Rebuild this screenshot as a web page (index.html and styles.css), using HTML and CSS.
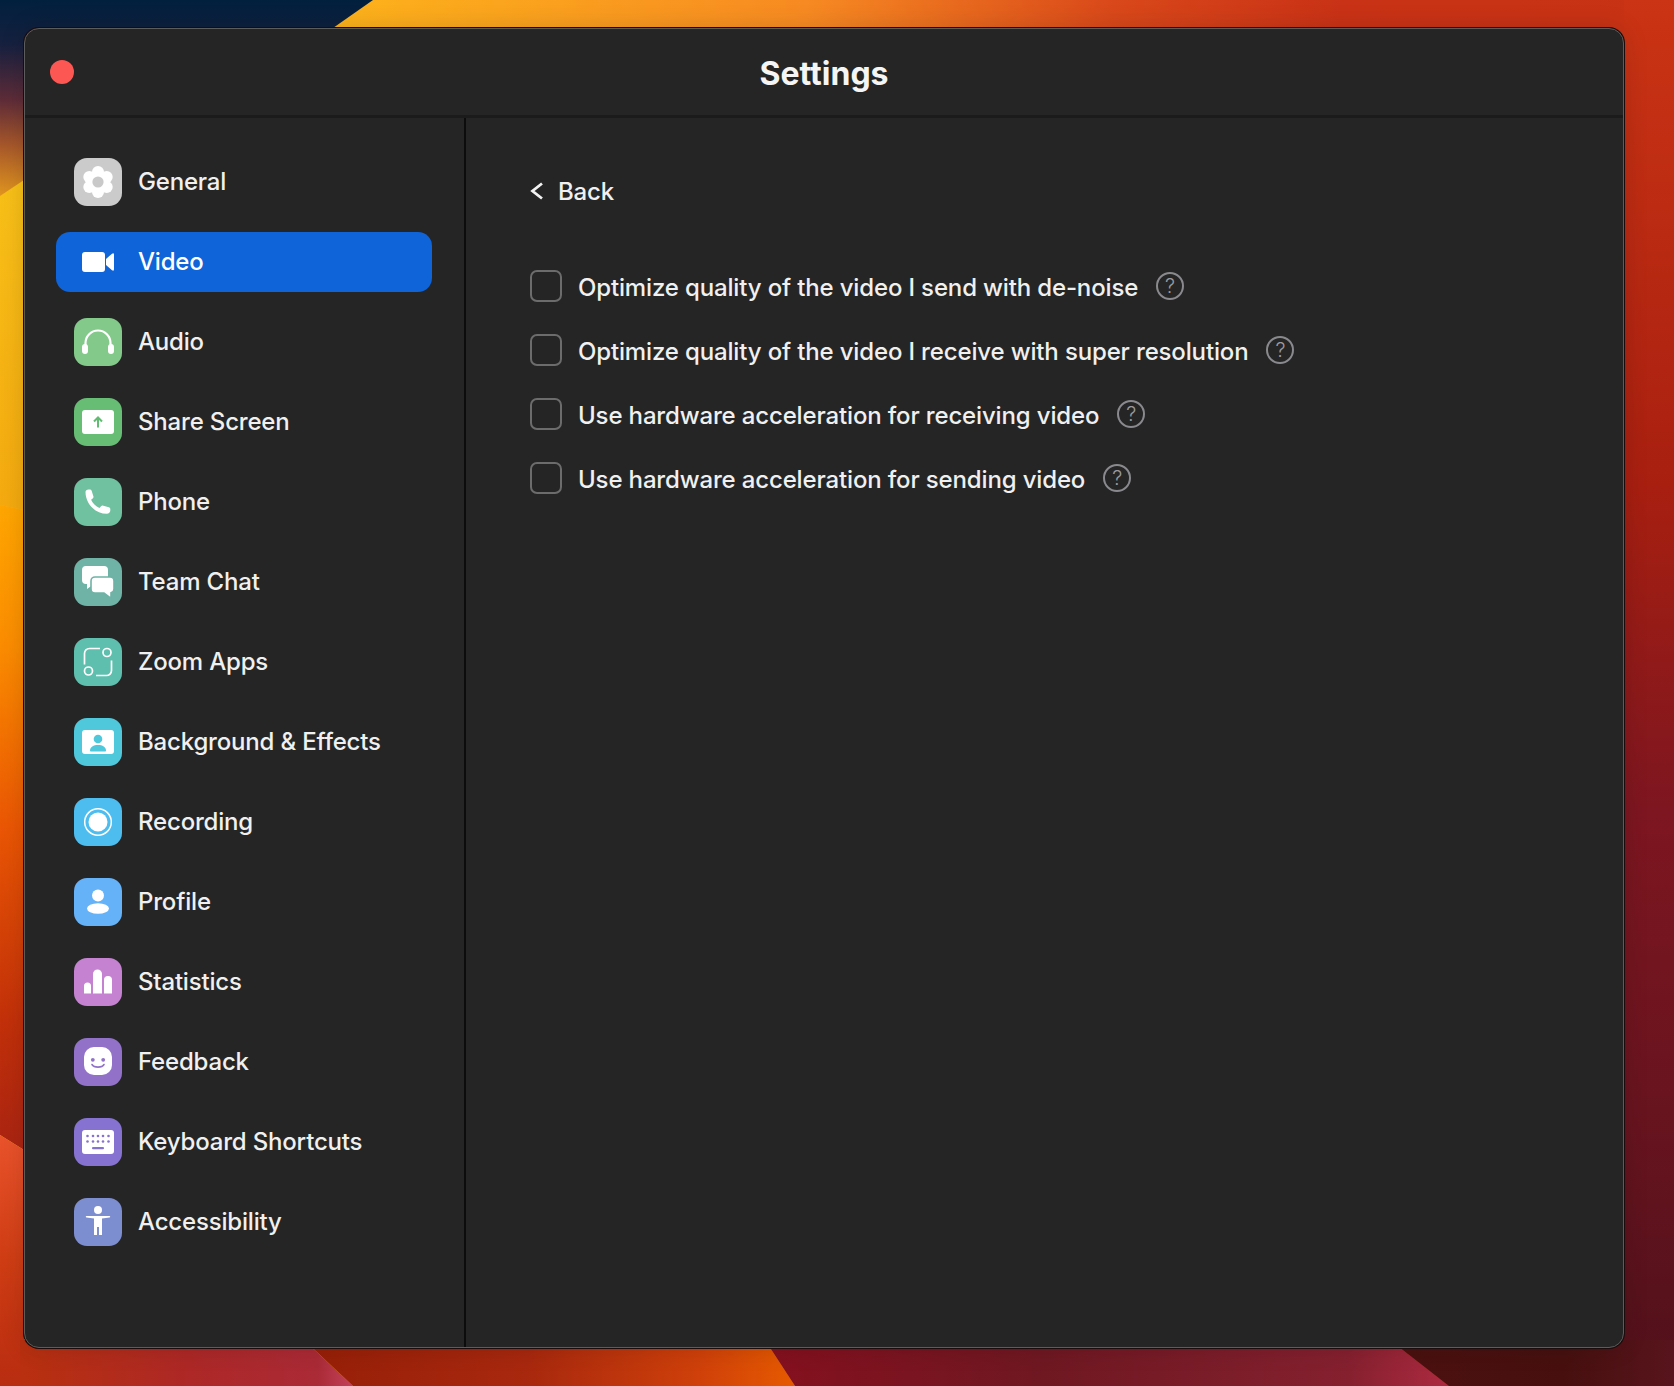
FILE: index.html
```html
<!DOCTYPE html>
<html lang="en">
<head>
<meta charset="utf-8">
<title>Settings</title>
<link rel="stylesheet" href="styles.css">
</head>
<body>
<svg class="wallpaper" viewBox="0 0 1674 1386" preserveAspectRatio="none" aria-hidden="true">
  <defs>
    <linearGradient id="topBand" x1="340" y1="0" x2="1674" y2="0" gradientUnits="userSpaceOnUse">
      <stop offset="0" stop-color="#fdb21b"/><stop offset="0.35" stop-color="#f78a22"/><stop offset="0.58" stop-color="#d9481a"/><stop offset="0.75" stop-color="#c93216"/><stop offset="1" stop-color="#c83214"/>
    </linearGradient>
    <linearGradient id="rightBand" x1="0" y1="0" x2="0" y2="1386" gradientUnits="userSpaceOnUse">
      <stop offset="0" stop-color="#cb3414"/><stop offset="0.35" stop-color="#a81f10"/><stop offset="0.58" stop-color="#7e1620"/><stop offset="0.8" stop-color="#68141f"/><stop offset="1" stop-color="#50111a"/>
    </linearGradient>
    <linearGradient id="navy" x1="0" y1="0" x2="0" y2="200" gradientUnits="userSpaceOnUse">
      <stop offset="0" stop-color="#01203e"/><stop offset="0.22" stop-color="#16203f"/><stop offset="0.5" stop-color="#5e2c38"/><stop offset="0.72" stop-color="#a5562a"/><stop offset="1" stop-color="#e59a1e"/>
    </linearGradient>
    <linearGradient id="leftA" x1="0" y1="180" x2="0" y2="520" gradientUnits="userSpaceOnUse">
      <stop offset="0" stop-color="#f8c018"/><stop offset="1" stop-color="#f4a90f"/>
    </linearGradient>
    <linearGradient id="leftB" x1="0" y1="505" x2="0" y2="1150" gradientUnits="userSpaceOnUse">
      <stop offset="0" stop-color="#ffa602"/><stop offset="0.22" stop-color="#fb8c00"/><stop offset="0.5" stop-color="#ea5604"/><stop offset="0.8" stop-color="#c2300a"/><stop offset="1" stop-color="#aa2412"/>
    </linearGradient>
    <linearGradient id="leftC" x1="0" y1="1135" x2="0" y2="1386" gradientUnits="userSpaceOnUse">
      <stop offset="0" stop-color="#ea532c"/><stop offset="0.5" stop-color="#cf3d14"/><stop offset="1" stop-color="#b82c10"/>
    </linearGradient>
    <linearGradient id="botA" x1="24" y1="0" x2="350" y2="0" gradientUnits="userSpaceOnUse">
      <stop offset="0" stop-color="#b8300f"/><stop offset="0.5" stop-color="#ad2826"/><stop offset="0.9" stop-color="#aa2a36"/><stop offset="1" stop-color="#c24058"/>
    </linearGradient>
    <linearGradient id="botB" x1="310" y1="0" x2="795" y2="0" gradientUnits="userSpaceOnUse">
      <stop offset="0" stop-color="#971f08"/><stop offset="0.45" stop-color="#a8280e"/><stop offset="0.8" stop-color="#cf400a"/><stop offset="1" stop-color="#e65a00"/>
    </linearGradient>
    <linearGradient id="botC" x1="770" y1="0" x2="1450" y2="0" gradientUnits="userSpaceOnUse">
      <stop offset="0" stop-color="#85101e"/><stop offset="0.4" stop-color="#6f1822"/><stop offset="0.85" stop-color="#85202f"/><stop offset="1" stop-color="#ad2a40"/>
    </linearGradient>
    <linearGradient id="botD" x1="1400" y1="0" x2="1674" y2="0" gradientUnits="userSpaceOnUse">
      <stop offset="0" stop-color="#4a110f"/><stop offset="0.6" stop-color="#47100f"/><stop offset="1" stop-color="#58141c"/>
    </linearGradient>
  </defs>
  <rect width="1674" height="1386" fill="url(#rightBand)"/>
  <polygon points="0,0 1674,0 1674,40 1600,1386 0,1386" fill="url(#topBand)"/>
  <rect x="1624" width="50" height="1386" fill="url(#rightBand)"/>
  <polygon points="0,0 373,0 333,28 0,200" fill="url(#navy)"/>
  <polygon points="0,196 24,180 24,510 0,505" fill="url(#leftA)"/>
  <polygon points="0,505 24,510 24,1150 0,1135" fill="url(#leftB)"/>
  <polygon points="0,1135 24,1150 24,1386 0,1386" fill="url(#leftC)"/>
  <polygon points="20,1340 304,1340 353,1386 20,1386" fill="url(#botA)"/>
  <polygon points="304,1340 765,1340 795,1386 353,1386" fill="url(#botB)"/>
  <polygon points="765,1340 1390,1340 1449,1386 795,1386" fill="url(#botC)"/>
  <polygon points="1390,1340 1674,1340 1674,1386 1449,1386" fill="url(#botD)"/>
</svg>

<div class="window">
  <header class="titlebar">
    <span class="close"></span>
    <h1 class="title">Settings</h1>
  </header>
  <div class="body">
    <nav class="sidebar">
      <a class="item"><span class="icon general"><svg viewBox="0 0 48 48"><g fill="#fff"><circle cx="24" cy="14" r="6"/><circle cx="24" cy="34" r="6"/><circle cx="15.3" cy="19" r="6"/><circle cx="32.7" cy="19" r="6"/><circle cx="15.3" cy="29" r="6"/><circle cx="32.7" cy="29" r="6"/><circle cx="24" cy="24" r="10"/></g><circle cx="24" cy="24" r="5.6" fill="#c9c9c9"/></svg></span><span>General</span></a>
      <a class="item active"><span class="icon"><svg viewBox="0 0 48 48"><rect x="8" y="14" width="23" height="20" rx="3" fill="#fff"/><path d="M32 21 38 15.7q2-1.3 2 1V31.300q0 2.300-2 1L32 27z" fill="#fff"/></svg></span><span>Video</span></a>
      <a class="item"><span class="icon audio"><svg viewBox="0 0 48 48"><path d="M11.500 30V25a12.500 12.500 0 0 1 25 0v5" fill="none" stroke="#fff" stroke-width="2.200"/><rect x="8" y="26" width="6" height="10" rx="3" fill="#fff"/><rect x="34" y="26" width="6" height="10" rx="3" fill="#fff"/></svg></span><span>Audio</span></a>
      <a class="item"><span class="icon share"><svg viewBox="0 0 48 48"><rect x="8" y="12" width="32" height="24" rx="3" fill="#fff"/><path d="M24 29.500V19.500M20 23.500l4-4 4 4" fill="none" stroke="#62bb72" stroke-width="2"/></svg></span><span>Share Screen</span></a>
      <a class="item"><span class="icon phone"><svg viewBox="0 0 48 48"><path d="M11.500 14C11.500 12.500 12.800 11.500 14.500 11.500H15.800C16.800 11.500 17.400 12 17.700 13L19.400 18.200C19.700 19.200 19.400 19.900 18.700 20.500L17.100 21.800C18.600 25.200 21.700 28.300 25.500 29.900L27 28.300C27.700 27.600 28.400 27.400 29.300 27.700L34.800 29.300C35.800 29.600 36.300 30.200 36.300 31.100V32.600C36.300 34.500 34.800 35.800 32.800 35.800 21 35.800 11.500 25.500 11.500 14Z" fill="#fff"/></svg></span><span>Phone</span></a>
      <a class="item"><span class="icon chat"><svg viewBox="0 0 48 48"><path d="M12 8H30a4 4 0 0 1 4 4V22a4 4 0 0 1-4 4H20L13 31V26H12a4 4 0 0 1-4-4V12a4 4 0 0 1 4-4Z" fill="#fff"/><path d="M21 19H36a4 4 0 0 1 4 4V31a4 4 0 0 1-3 3.800V40.500L30 35H21a4 4 0 0 1-4-4V23a4 4 0 0 1 4-4Z" fill="#fff" stroke="#6fb2a6" stroke-width="1.600"/></svg></span><span>Team Chat</span></a>
      <a class="item"><span class="icon apps"><svg viewBox="0 0 48 48"><g fill="none" stroke="#fff" stroke-width="1.700"><path d="M10.500 26.500V15.500a5 5 0 0 1 5-5H26"/><path d="M37.500 22.500V32.500a5 5 0 0 1-5 5H22"/><circle cx="33" cy="14.500" r="4"/><circle cx="14.500" cy="33" r="4"/></g></svg></span><span>Zoom Apps</span></a>
      <a class="item"><span class="icon bg"><svg viewBox="0 0 48 48"><rect x="8" y="12" width="32" height="24" rx="3" fill="#fff"/><circle cx="24" cy="21" r="4.300" fill="#4fc8dc"/><path d="M16 32.500C16 29 19.500 27 24 27S32 29 32 32.500c0 .6-.4 1-1 1H17c-.6 0-1-.4-1-1Z" fill="#4fc8dc"/></svg></span><span>Background &amp; Effects</span></a>
      <a class="item"><span class="icon rec"><svg viewBox="0 0 48 48"><circle cx="24" cy="24" r="13.300" fill="none" stroke="#fff" stroke-width="1.500"/><circle cx="24" cy="24" r="9.500" fill="#fff"/></svg></span><span>Recording</span></a>
      <a class="item"><span class="icon profile"><svg viewBox="0 0 48 48"><circle cx="24" cy="17.500" r="6" fill="#fff"/><ellipse cx="24" cy="30.500" rx="11" ry="5.300" fill="#fff"/></svg></span><span>Profile</span></a>
      <a class="item"><span class="icon stats"><svg viewBox="0 0 48 48"><g fill="#fff"><path d="M10 28a3.500 3.500 0 0 1 7 0v7.500H10Z"/><path d="M19 16a4.500 4.500 0 0 1 9 0v19.500H19Z"/><path d="M30 22a4 4 0 0 1 8 0v13.500H30Z"/></g></svg></span><span>Statistics</span></a>
      <a class="item"><span class="icon feedback"><svg viewBox="0 0 48 48"><rect x="10" y="9" width="28" height="28" rx="10" fill="#fff"/><circle cx="18.800" cy="21.800" r="1.900" fill="#9172c8"/><circle cx="29.200" cy="21.800" r="1.900" fill="#9172c8"/><path d="M18 26.500C20 30 28 30 30 26.500" fill="none" stroke="#9172c8" stroke-width="1.600" stroke-linecap="round"/></svg></span><span>Feedback</span></a>
      <a class="item"><span class="icon keys"><svg viewBox="0 0 48 48"><rect x="8" y="12" width="32" height="24" rx="3" fill="#fff"/><g fill="#8672d0"><circle cx="13.500" cy="18" r="1.300"/><circle cx="19" cy="18" r="1.300"/><circle cx="24" cy="18" r="1.300"/><circle cx="29" cy="18" r="1.300"/><circle cx="34.500" cy="18" r="1.300"/><circle cx="13.500" cy="23.500" r="1.300"/><circle cx="19" cy="23.500" r="1.300"/><circle cx="24" cy="23.500" r="1.300"/><circle cx="29" cy="23.500" r="1.300"/><circle cx="34.500" cy="23.500" r="1.300"/><rect x="18" y="29" width="12" height="2.200" rx="1"/></g></svg></span><span>Keyboard Shortcuts</span></a>
      <a class="item"><span class="icon access"><svg viewBox="0 0 48 48"><circle cx="24" cy="12" r="4" fill="#fff"/><path d="M12.500 18H35.500a.7.7 0 0 1 0 1.400L28 20.500V37H25V29H23V37H20V20.500L12.500 19.400a.7.7 0 0 1 0-1.400Z" fill="#fff"/></svg></span><span>Accessibility</span></a>
    </nav>
    <main class="content">
      <a class="back"><svg class="chevron" viewBox="0 0 14 18"><path d="M12 1.500 2.500 9 12 16.500" fill="none" stroke="#f2f2f2" stroke-width="2.800"/></svg><span>Back</span></a>
      <ul class="options">
        <li class="option"><span class="check"></span><span>Optimize quality of the video I send with de-noise</span><span class="help">?</span></li>
        <li class="option"><span class="check"></span><span>Optimize quality of the video I receive with super resolution</span><span class="help">?</span></li>
        <li class="option"><span class="check"></span><span>Use hardware acceleration for receiving video</span><span class="help">?</span></li>
        <li class="option"><span class="check"></span><span>Use hardware acceleration for sending video</span><span class="help">?</span></li>
      </ul>
    </main>
  </div>
</div>
</body>
</html>
```

FILE: styles.css
```css
* { box-sizing: border-box; }
html, body { margin: 0; height: 100%; }
body {
  position: relative;
  width: 1674px;
  height: 1386px;
  padding: 28px 50px 38px 24px;
  overflow: hidden;
  font-family: Inter, "Noto Sans", "Liberation Sans", sans-serif;
  color: #f0f0f0;
  background: #7a1a1a;
}
.wallpaper {
  position: absolute;
  inset: 0;
  width: 1674px;
  height: 1386px;
  z-index: 0;
}
.window {
  position: relative;
  z-index: 1;
  display: flex;
  flex-direction: column;
  width: 1600px;
  height: 1320px;
  background: #252525;
  border: 1px solid #5c5c5c;
  border-radius: 15px;
  box-shadow: 0 0 0 1px #1a0c0c, 0 0 26px rgba(0, 0, 0, .14);
  overflow: hidden;
}
.titlebar {
  position: relative;
  flex: none;
  display: flex;
  align-items: center;
  justify-content: center;
  height: 89px;
  border-bottom: 3px solid #1b1b1b;
  padding-top: 3px;
}
.close {
  position: absolute;
  left: 25px;
  top: 31px;
  width: 24px;
  height: 24px;
  border-radius: 50%;
  background: #fc5753;
}
.title {
  margin: 0;
  font-size: 32px;
  line-height: 40px;
  font-weight: 700;
  color: #f5f5f5;
}
.body {
  flex: 1;
  display: flex;
  min-height: 0;
}
.sidebar {
  flex: none;
  width: 441px;
  border-right: 2px solid #0c0c0c;
  padding: 34px 0 0 31px;
  display: flex;
  flex-direction: column;
  gap: 20px;
}
.item {
  display: flex;
  align-items: center;
  gap: 16px;
  width: 376px;
  height: 60px;
  padding-left: 18px;
  border-radius: 14px;
  font-size: 24px;
  font-weight: 500;
  line-height: 30px;
  letter-spacing: -0.18px;
  color: #f0f0f0;
}
.item.active { background: #0e64d8; color: #fff; }
.icon {
  flex: none;
  width: 48px;
  height: 48px;
  border-radius: 13px;
}
.icon svg { display: block; width: 48px; height: 48px; }
.general { background: #cbcbcb; }
.audio { background: #83c98a; }
.share { background: #68bd74; }
.phone { background: #6fc1a0; }
.chat { background: #6fb2a6; }
.apps { background: #5fbfae; }
.bg { background: #4fc8dc; }
.rec { background: #4dbdf0; }
.profile { background: #65b2f8; }
.stats { background: #c482d0; }
.feedback { background: #9172c8; }
.keys { background: #8672d0; }
.access { background: #7d8ed0; }
.content {
  flex: 1;
  padding: 55px 0 0 64px;
}
.back {
  display: flex;
  align-items: center;
  gap: 14px;
  height: 36px;
  font-size: 24px;
  font-weight: 500;
  letter-spacing: -0.18px;
  color: #f0f0f0;
}
.chevron { display: block; width: 14px; height: 18px; }
.options {
  list-style: none;
  margin: 57px 0 0;
  padding: 0;
  display: flex;
  flex-direction: column;
  gap: 24px;
}
.option {
  display: flex;
  align-items: center;
  height: 40px;
  font-size: 24px;
  font-weight: 500;
  letter-spacing: -0.15px;
  color: #f0f0f0;
}
.option > span:nth-child(2) { position: relative; top: 1px; }
.check {
  flex: none;
  width: 32px;
  height: 32px;
  margin-right: 16px;
  border: 2px solid #6c6c6c;
  border-radius: 7px;
}
.help {
  flex: none;
  display: flex;
  align-items: center;
  justify-content: center;
  width: 28px;
  height: 28px;
  margin-left: 18px;
  border: 2px solid #8a8a8e;
  border-radius: 50%;
  font-size: 20px;
  font-weight: 300;
  line-height: 1;
  letter-spacing: 0;
  color: #9a9a9e;
}
```
